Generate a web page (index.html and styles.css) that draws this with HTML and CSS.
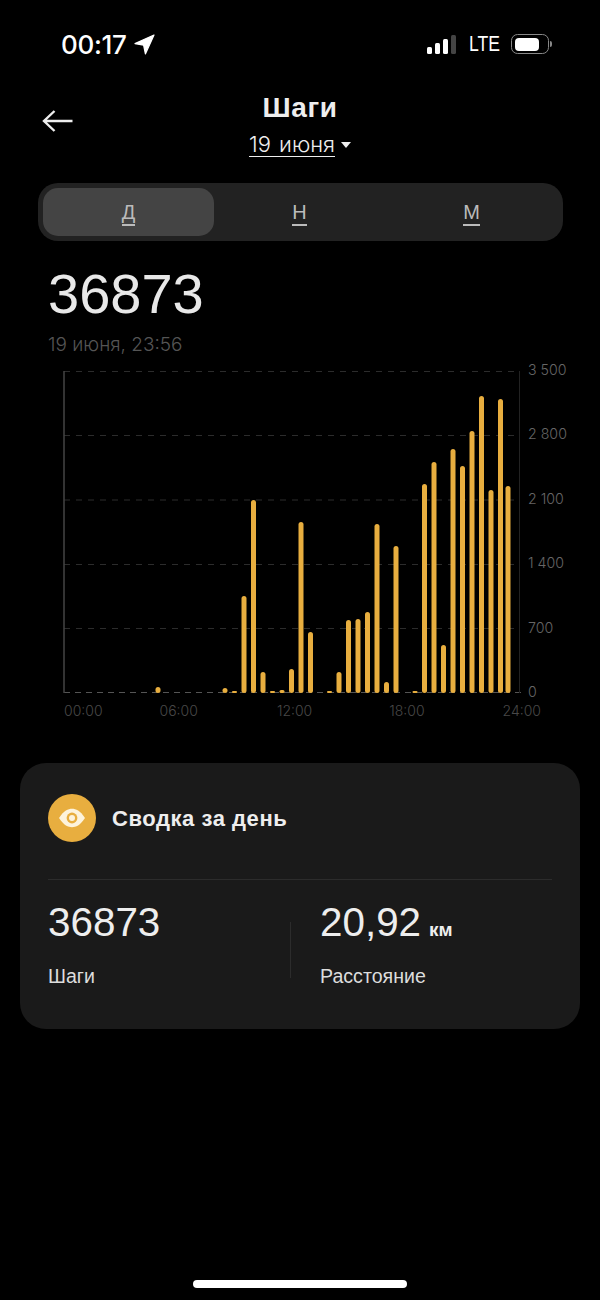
FILE: index.html
```html
<!DOCTYPE html>
<html lang="ru">

<head>
    <meta charset="UTF-8">
    <meta name="viewport" content="width=device-width, initial-scale=1.0">
    <title>Шаги</title>
    <link rel="stylesheet" href="styles.css">
</head>

<body>
    <div class="statusbar">
        <div class="status-left">
            <span class="clock">00:17</span>
            <svg class="locate" width="21" height="21" viewBox="0 0 21 21">
                <path d="M20 1 L1 9.6 L9.6 11.2 L11.4 20 Z" fill="#fff" stroke="#fff" stroke-width="1.2" stroke-linejoin="round" />
            </svg>
        </div>
        <div class="status-right">
            <div class="signal">
                <i class="s1"></i>
                <i class="s2"></i>
                <i class="s3"></i>
                <i class="s4"></i>
            </div>
            <span class="lte">LTE</span>
            <div class="battery">
                <div class="battery-fill"></div>
            </div>
            <div class="battery-tip"></div>
        </div>
    </div>

    <header class="nav">
        <svg class="back" width="32" height="24" viewBox="0 0 32 24">
            <path d="M30.5 12 H2 M12.5 2 L2 12 L12.5 22" fill="none" stroke="#eee" stroke-width="2.4" />
        </svg>
        <h1>Шаги</h1>
        <div class="date-pick"><span>19 июня</span><i class="caret"></i></div>
    </header>

    <div class="tabs">
        <div class="tab active"><span>Д</span></div>
        <div class="tab"><span>Н</span></div>
        <div class="tab"><span>М</span></div>
    </div>

    <div class="total">36873</div>
    <div class="total-date">19 июня, 23:56</div>

    <div class="chart">
        <svg class="plot" width="460" height="325" viewBox="0 0 460 325">
            <g class="grid">
                <line x1="1" y1="2.5" x2="456" y2="2.5" />
                <line x1="1" y1="66.5" x2="456" y2="66.5" />
                <line x1="1" y1="131" x2="456" y2="131" />
                <line x1="1" y1="195.5" x2="456" y2="195.5" />
                <line x1="1" y1="259.5" x2="456" y2="259.5" />
            </g>
            <line class="zero" x1="1" y1="323.5" x2="462" y2="323.5" />
            <line class="axis-l" x1="1" y1="2" x2="1" y2="324" />
            <line class="axis-r" x1="456.5" y1="2" x2="456.5" y2="324" />
            <g class="bars">
                <rect x="92.5" y="318" width="5" height="6" rx="2.5" />
                <rect x="159.5" y="319" width="5" height="5" rx="2.5" />
                <rect x="169" y="322" width="5" height="2" rx="1" />
                <rect x="178.5" y="227" width="5" height="97" rx="2.5" />
                <rect x="188" y="131" width="5" height="193" rx="2.5" />
                <rect x="197.5" y="303" width="5" height="21" rx="2.5" />
                <rect x="207" y="322" width="5" height="2" rx="1" />
                <rect x="216.5" y="321" width="5" height="3" rx="1.5" />
                <rect x="226" y="300" width="5" height="24" rx="2.5" />
                <rect x="235.5" y="153" width="5" height="171" rx="2.5" />
                <rect x="245" y="263" width="5" height="61" rx="2.5" />
                <rect x="264" y="322" width="5" height="2" rx="1" />
                <rect x="273.5" y="303" width="5" height="21" rx="2.5" />
                <rect x="283" y="251" width="5" height="73" rx="2.5" />
                <rect x="292.5" y="250" width="5" height="74" rx="2.5" />
                <rect x="302" y="243" width="5" height="81" rx="2.5" />
                <rect x="311.5" y="155" width="5" height="169" rx="2.5" />
                <rect x="321" y="313" width="5" height="11" rx="2.5" />
                <rect x="330.5" y="177" width="5" height="147" rx="2.5" />
                <rect x="349.5" y="322" width="5" height="2" rx="1" />
                <rect x="359" y="115" width="5" height="209" rx="2.5" />
                <rect x="368.5" y="93" width="5" height="231" rx="2.5" />
                <rect x="378" y="276" width="5" height="48" rx="2.5" />
                <rect x="387.5" y="80" width="5" height="244" rx="2.5" />
                <rect x="397" y="97" width="5" height="227" rx="2.5" />
                <rect x="406.5" y="62" width="5" height="262" rx="2.5" />
                <rect x="416" y="27" width="5" height="297" rx="2.5" />
                <rect x="425.5" y="121" width="5" height="203" rx="2.5" />
                <rect x="435" y="30" width="5" height="294" rx="2.5" />
                <rect x="442.5" y="117" width="5" height="207" rx="2.5" />
            </g>
        </svg>
        <div class="y-labels">
            <span>3 500</span>
            <span>2 800</span>
            <span>2 100</span>
            <span>1 400</span>
            <span>700</span>
            <span>0</span>
        </div>
        <div class="x-labels">
            <span>00:00</span>
            <span>06:00</span>
            <span>12:00</span>
            <span>18:00</span>
            <span>24:00</span>
        </div>
    </div>

    <section class="card">
        <div class="card-head">
            <div class="card-icon">
                <svg width="28" height="20" viewBox="0 0 28 20">
                    <path d="M1 10 C6 2.5 10 .8 14 .8 S22 2.5 27 10 C22 17.5 18 19.2 14 19.2 S6 17.5 1 10 Z" fill="#fdf3dc" />
                    <circle cx="14" cy="10" r="5.4" fill="#e8ae3f" />
                    <circle cx="14" cy="10" r="3" fill="#fdf3dc" />
                </svg>
            </div>
            <h2>Сводка за день</h2>
        </div>
        <div class="stats">
            <div class="stat">
                <div class="stat-value">36873</div>
                <div class="stat-label">Шаги</div>
            </div>
            <div class="stat stat-second">
                <div class="stat-value">20,92<small>км</small></div>
                <div class="stat-label">Расстояние</div>
            </div>
        </div>
    </section>

    <div class="home-bar"></div>
</body>

</html>
```

FILE: styles.css
```css
* {
    box-sizing: border-box;
}

html,
body {
    margin: 0;
    background: #000;
}

body {
    width: 600px;
    height: 1300px;
    overflow: hidden;
    position: relative;
    font-family: "Liberation Sans", Arial, sans-serif;
    color: #eee;
}

.statusbar {
    height: 58px;
    padding: 30px 48px 0 61px;
    display: flex;
    justify-content: space-between;
    align-items: center;
}

.status-left {
    display: flex;
    align-items: center;
    gap: 7px;
}

.clock {
    font-family: Inter, sans-serif;
    font-size: 26px;
    font-weight: 500;
    letter-spacing: -0.3px;
    color: #fff;
}

.status-right {
    display: flex;
    align-items: center;
}

.signal {
    display: flex;
    align-items: flex-end;
    gap: 3px;
    height: 20px;
}

.signal i {
    display: block;
    width: 5px;
    border-radius: 1.5px;
    background: #fff;
}

.signal .s1 {
    height: 7px;
}

.signal .s2 {
    height: 11px;
}

.signal .s3 {
    height: 15px;
}

.signal .s4 {
    height: 19px;
    background: #444;
}

.lte {
    margin-left: 13px;
    width: 42px;
    font-size: 22px;
    color: #fff;
    transform: scaleX(0.8);
    transform-origin: left center;
}

.battery {
    width: 38px;
    height: 20px;
    padding: 2.5px;
    border: 1.5px solid #888;
    border-radius: 6.5px;
}

.battery-fill {
    width: 24px;
    height: 100%;
    border-radius: 4px;
    background: #fff;
}

.battery-tip {
    width: 2px;
    height: 6px;
    margin-left: 1px;
    border-radius: 0 2px 2px 0;
    background: #888;
}

.nav {
    position: relative;
    height: 103px;
    padding-top: 34px;
    text-align: center;
}

.nav h1 {
    margin: 0;
    font-size: 28px;
    line-height: 32px;
    font-weight: 700;
    letter-spacing: 0.6px;
}

.back {
    position: absolute;
    left: 42px;
    top: 51px;
}

.date-pick {
    margin-top: 8px;
    display: flex;
    justify-content: center;
    align-items: center;
    gap: 6px;
    font-family: Inter, sans-serif;
    font-size: 22px;
    line-height: 26px;
    font-weight: 300;
    word-spacing: 2px;
    color: #eee;
}

.date-pick span {
    border-bottom: 1.5px solid #eee;
    line-height: 24px;
}

.caret {
    width: 0;
    height: 0;
    border-left: 5.5px solid transparent;
    border-right: 5.5px solid transparent;
    border-top: 6.5px solid #eee;
}

.tabs {
    margin: 22px 37px 0 38px;
    height: 58px;
    padding: 5px;
    display: grid;
    grid-template-columns: 171px 171px 173px;
    border-radius: 20px;
    background: #222;
}

.tab {
    display: flex;
    justify-content: center;
    align-items: center;
    padding-top: 2px;
    border-radius: 15px;
    font-size: 20px;
    color: #bbb;
}

.tab span {
    border-bottom: 2px solid #bbb;
    line-height: 24px;
}

.tab.active {
    background: #444;
}

.total {
    margin: 20px 0 0 48px;
    font-size: 56px;
    line-height: 66px;
    color: #e8e8e8;
}

.total-date {
    margin: 6px 0 0 48px;
    font-family: Inter, sans-serif;
    font-size: 19px;
    line-height: 24px;
    font-weight: 300;
    color: #555;
}

.chart {
    position: relative;
    height: 368px;
    margin: 12px 0 0 63px;
}

.plot {
    display: block;
}

.grid line {
    stroke: #2c2c2c;
    stroke-width: 1;
    stroke-dasharray: 6 6;
}

.zero {
    stroke: #555;
    stroke-width: 1;
    stroke-dasharray: 6 5;
}

.axis-l {
    stroke: #444;
    stroke-width: 1.5;
}

.axis-r {
    stroke: #222;
    stroke-width: 1;
}

.bars rect {
    fill: #e8ae3f;
}

.y-labels {
    position: absolute;
    left: 465px;
    top: -9px;
    height: 342px;
    display: flex;
    flex-direction: column;
    justify-content: space-between;
    font-family: Inter, sans-serif;
    font-size: 14.2px;
    line-height: 20px;
    font-weight: 300;
    color: #666;
}

.x-labels {
    display: flex;
    gap: 76px;
    margin-top: 7px;
    padding-left: 1px;
    font-family: Inter, sans-serif;
    font-size: 14px;
    line-height: 20px;
    font-weight: 300;
    color: #484848;
}

.x-labels span:first-child {
    margin-right: -19px;
}

.x-labels span:nth-child(2) {
    margin-right: 3px;
}

.x-labels span:nth-child(3) {
    margin-right: 1px;
}

.x-labels span:nth-child(4) {
    margin-right: 2px;
}

.card {
    position: relative;
    height: 266px;
    margin: 26px 20px 0;
    padding: 31px 28px 0;
    border-radius: 26px;
    background: #1a1a1a;
}

.card-head {
    display: flex;
    align-items: center;
    gap: 16px;
    height: 86px;
    padding-bottom: 37px;
    border-bottom: 1px solid #2c2c2c;
}

.card-icon {
    width: 48px;
    height: 48px;
    display: flex;
    justify-content: center;
    align-items: center;
    border-radius: 50%;
    background: #e8ae3f;
}

.card-head h2 {
    margin: 2px 0 0;
    font-size: 22px;
    font-weight: 700;
    letter-spacing: 0.55px;
    color: #eee;
}

.stats {
    display: flex;
    margin-top: 17px;
}

.stat {
    width: 242px;
}

.stat-second {
    padding-left: 30px;
    position: relative;
}

.stat-second::before {
    content: "";
    position: absolute;
    left: 0;
    top: 25px;
    height: 56px;
    border-left: 1px solid #2c2c2c;
}

.stat-value {
    height: 50px;
    font-size: 40.4px;
    line-height: 50px;
    color: #eee;
}

.stat-value small {
    margin-left: 8px;
    font-size: 19px;
    line-height: 1;
    font-weight: 700;
}

.stat-label {
    margin-top: 17px;
    font-size: 19.6px;
    line-height: 24px;
    color: #ddd;
}

.home-bar {
    position: absolute;
    left: 193px;
    top: 1280px;
    width: 214px;
    height: 8px;
    border-radius: 4px;
    background: #fff;
}
```
